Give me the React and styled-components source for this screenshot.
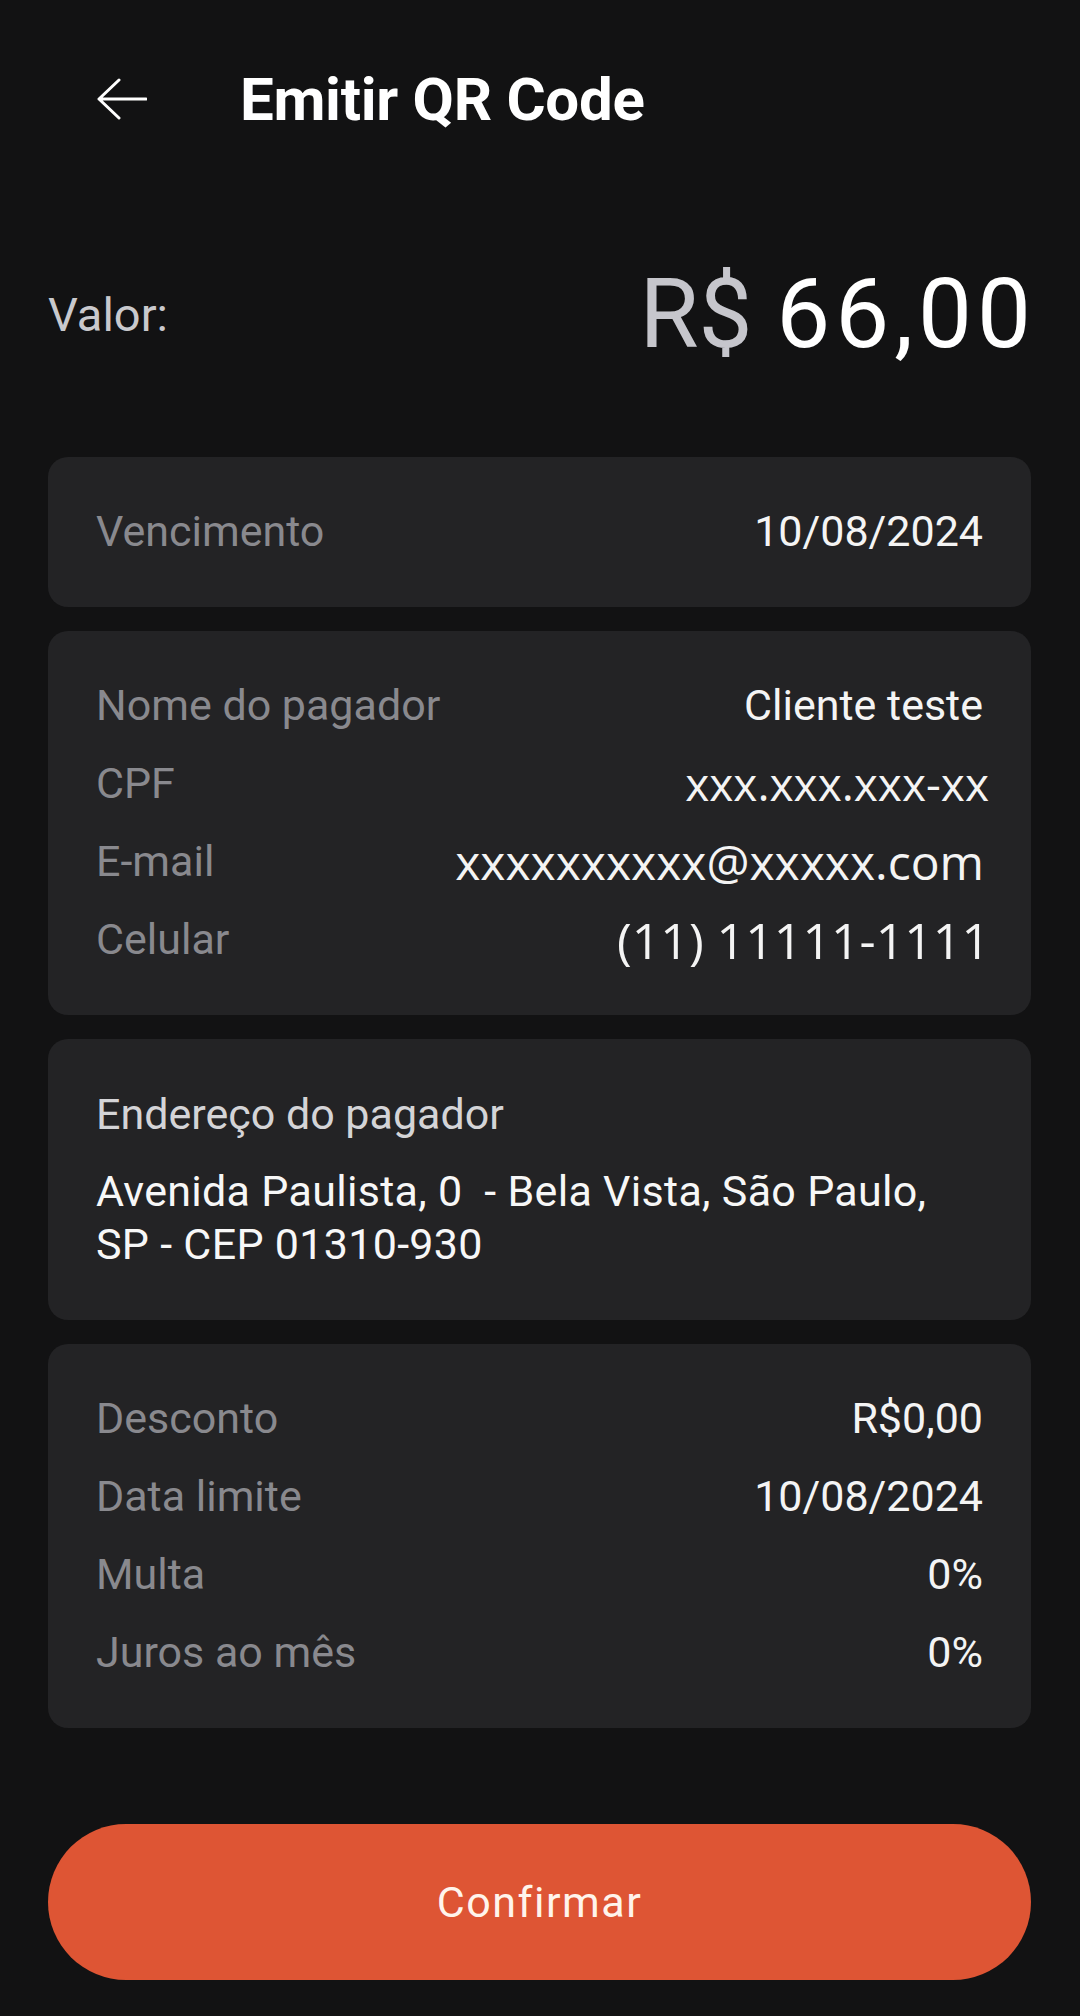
import React from 'react';
import styled, { createGlobalStyle } from 'styled-components';

const GlobalStyle = createGlobalStyle`
  html, body {
    margin: 0;
    padding: 0;
    background: #121213;
  }
  body {
    font-family: Roboto, "Liberation Sans", sans-serif;
    -webkit-font-smoothing: antialiased;
  }
  * {
    box-sizing: border-box;
  }
`;

const Page = styled.div`
  width: 1080px;
  min-height: 2016px;
  padding: 0 49px 0 48px;
  background: #121213;
  color: #f7f7f7;
`;

const Header = styled.header`
  height: 198px;
  display: flex;
  align-items: center;
`;

const BackButton = styled.button`
  margin-left: 49px;
  padding: 0;
  border: 0;
  background: none;
  display: flex;
  cursor: pointer;
`;

const Title = styled.h1`
  margin: 0 0 0 93px;
  font-size: 60px;
  font-weight: 700;
  color: #ffffff;
  letter-spacing: -0.3px;
`;

const AmountRow = styled.section`
  margin-top: 60px;
  height: 113px;
  display: flex;
  align-items: center;
  justify-content: space-between;
`;

const AmountLabel = styled.span`
  font-size: 47px;
  color: #c9c9cd;
`;

const Amount = styled.span`
  font-size: 96px;
  color: #ffffff;
  line-height: 1.2;
  white-space: nowrap;
`;

const Currency = styled.span`
  color: #c6c6cc;
`;

const Digits = styled.span`
  letter-spacing: 5px;
  margin-right: -5px;
`;

const Cards = styled.div`
  margin-top: 86px;
  display: flex;
  flex-direction: column;
  gap: 24px;
`;

const Card = styled.div`
  background: #232325;
  border-radius: 20px;
  padding: ${(p) => p.$padding || '36px 48px'};
`;

const Row = styled.div`
  height: 78px;
  display: flex;
  align-items: center;
  justify-content: space-between;
`;

const Label = styled.span`
  font-size: 43px;
  line-height: 1.2;
  color: #89898e;
`;

const Value = styled.span`
  font-family: ${(p) => (p.$alt ? '"Open Sans", "Noto Sans", sans-serif' : 'Roboto, "Liberation Sans", sans-serif')};
  font-size: ${(p) => p.$size || 43}px;
  line-height: 1.2;
  color: #f4f4f4;
  margin-right: ${(p) => p.$shift || 0}px;
  white-space: nowrap;
`;

const BlockTitle = styled.div`
  font-size: 43px;
  line-height: 56px;
  color: #d4d4d7;
`;

const Address = styled.p`
  margin: 23px 0 0;
  font-size: 43px;
  line-height: 53px;
  letter-spacing: 0.3px;
  color: #f7f7f7;
`;

const ConfirmButton = styled.button`
  margin-top: 96px;
  width: 100%;
  height: 156px;
  border: 0;
  border-radius: 78px;
  background: #de5534;
  color: #fff4ec;
  font-family: Roboto, "Liberation Sans", sans-serif;
  font-size: 43px;
  letter-spacing: 1.5px;
  cursor: pointer;
`;

const BackArrow = () => (
  <svg width="50" height="42" viewBox="0 0 50 42" fill="none">
    <path
      d="M2 21H49M22 2L2 21L22 40"
      stroke="#ffffff"
      strokeWidth="3"
      strokeLinecap="round"
      strokeLinejoin="round"
    />
  </svg>
);

const payer = [
  { label: 'Nome do pagador', value: 'Cliente teste' },
  { label: 'CPF', value: 'xxx.xxx.xxx-xx', alt: true, size: 46, shift: -6 },
  { label: 'E-mail', value: 'xxxxxxxxxx@xxxxx.com', alt: true, size: 48, shift: -1 },
  { label: 'Celular', value: '(11) 11111-1111', alt: true, size: 50, shift: -7 },
];

const charges = [
  { label: 'Desconto', value: 'R$0,00' },
  { label: 'Data limite', value: '10/08/2024' },
  { label: 'Multa', value: '0%' },
  { label: 'Juros ao mês', value: '0%' },
];

const InfoRow = ({ label, value, alt, size, shift }) => (
  <Row>
    <Label>{label}</Label>
    <Value $alt={alt} $size={size} $shift={shift}>
      {value}
    </Value>
  </Row>
);

export default function App() {
  return (
    <>
      <GlobalStyle />
      <Page>
        <Header>
          <BackButton aria-label="Voltar">
            <BackArrow />
          </BackButton>
          <Title>Emitir QR Code</Title>
        </Header>

        <AmountRow>
          <AmountLabel>Valor:</AmountLabel>
          <Amount>
            <Currency>R$</Currency> <Digits>66,00</Digits>
          </Amount>
        </AmountRow>

        <Cards>
          <Card>
            <InfoRow label="Vencimento" value="10/08/2024" />
          </Card>

          <Card>
            {payer.map((item) => (
              <InfoRow key={item.label} {...item} />
            ))}
          </Card>

          <Card $padding="47px 48px 49px">
            <BlockTitle>Endereço do pagador</BlockTitle>
            <Address>
              Avenida Paulista, 0{'\u00a0'} - Bela Vista, São Paulo, SP - CEP 01310-930
            </Address>
          </Card>

          <Card>
            {charges.map((item) => (
              <InfoRow key={item.label} {...item} />
            ))}
          </Card>
        </Cards>

        <ConfirmButton>Confirmar</ConfirmButton>
      </Page>
    </>
  );
}
